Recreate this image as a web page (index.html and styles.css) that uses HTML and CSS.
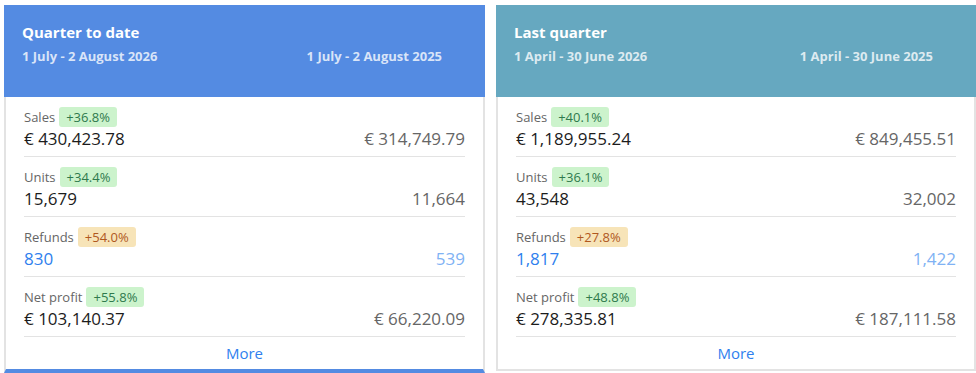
FILE: index.html
```html
<!DOCTYPE html>
<html lang="en">
<head>
<meta charset="utf-8">
<title>Quarter overview</title>
<link rel="stylesheet" href="styles.css">
</head>
<body>
<div class="cards">
  <section class="card card-active">
    <header class="card-head head-blue">
      <h2 class="card-title">Quarter to date</h2>
      <div class="dates">
        <span>1 July - 2 August 2026</span>
        <span>1 July - 2 August 2025</span>
      </div>
    </header>
    <div class="card-body">
      <div class="row">
        <div class="label">Sales <span class="badge up">+36.8%</span></div>
        <div class="values"><span class="cur">€ 430,423.78</span><span class="prev">€ 314,749.79</span></div>
      </div>
      <div class="row">
        <div class="label">Units <span class="badge up">+34.4%</span></div>
        <div class="values"><span class="cur">15,679</span><span class="prev">11,664</span></div>
      </div>
      <div class="row">
        <div class="label">Refunds <span class="badge warn">+54.0%</span></div>
        <div class="values link"><span class="cur">830</span><span class="prev">539</span></div>
      </div>
      <div class="row">
        <div class="label">Net profit <span class="badge up">+55.8%</span></div>
        <div class="values"><span class="cur">€ 103,140.37</span><span class="prev">€ 66,220.09</span></div>
      </div>
      <a class="more" href="#">More</a>
    </div>
  </section>
  <section class="card">
    <header class="card-head head-teal">
      <h2 class="card-title">Last quarter</h2>
      <div class="dates">
        <span>1 April - 30 June 2026</span>
        <span>1 April - 30 June 2025</span>
      </div>
    </header>
    <div class="card-body">
      <div class="row">
        <div class="label">Sales <span class="badge up">+40.1%</span></div>
        <div class="values"><span class="cur">€ 1,189,955.24</span><span class="prev">€ 849,455.51</span></div>
      </div>
      <div class="row">
        <div class="label">Units <span class="badge up">+36.1%</span></div>
        <div class="values"><span class="cur">43,548</span><span class="prev">32,002</span></div>
      </div>
      <div class="row">
        <div class="label">Refunds <span class="badge warn">+27.8%</span></div>
        <div class="values link"><span class="cur">1,817</span><span class="prev">1,422</span></div>
      </div>
      <div class="row">
        <div class="label">Net profit <span class="badge up">+48.8%</span></div>
        <div class="values"><span class="cur">€ 278,335.81</span><span class="prev">€ 187,111.58</span></div>
      </div>
      <a class="more" href="#">More</a>
    </div>
  </section>
</div>
</body>
</html>
```

FILE: styles.css
```css
* { box-sizing: border-box; }

html, body {
  margin: 0;
  padding: 0;
  background: #ffffff;
}

body {
  font-family: "Open Sans", "Liberation Sans", sans-serif;
  color: #222;
  overflow: hidden;
}

.cards {
  display: grid;
  grid-template-columns: 481px 480px;
  column-gap: 11px;
  padding: 5px 0 0 4px;
}

.card {
  display: flex;
  flex-direction: column;
}

.card-head {
  padding: 17px 43px 32px 18px;
  color: #fff;
}

.head-blue { background: #548be2; }
.head-teal { background: #66a8c0; }

.card-title {
  margin: 0;
  font-size: 15px;
  line-height: 20px;
  font-weight: 700;
}

.dates {
  display: flex;
  justify-content: space-between;
  margin-top: 6px;
  font-size: 13px;
  line-height: 17px;
  font-weight: 700;
  color: rgba(255, 255, 255, 0.78);
}

.card-body {
  border: 2px solid #e3e3e3;
  border-top: 0;
  padding: 0 18px;
  display: flex;
  flex-direction: column;
}

.card-active .card-body {
  border-bottom: 4px solid #548be2;
}

.row {
  padding: 10px 0 5px;
  border-bottom: 1px solid #e3e3e3;
}

.label {
  display: flex;
  align-items: center;
  gap: 4px;
  height: 20px;
  font-size: 13px;
  color: #666;
}

.badge {
  display: inline-block;
  height: 20px;
  line-height: 20px;
  padding: 0 7px;
  border-radius: 3px;
  font-size: 13px;
}

.badge.up {
  background: #ccf3cc;
  color: #2f7a4c;
}

.badge.warn {
  background: #f7e4b8;
  color: #b0581e;
}

.values {
  display: flex;
  justify-content: space-between;
  font-size: 17px;
  line-height: 24px;
}

.values .cur { color: #1c1c1c; }
.values .prev { color: #666; }

.values.link .cur { color: #2f7fee; }
.values.link .prev { color: #80b2f4; }

.more {
  display: block;
  height: 32px;
  line-height: 32px;
  text-align: center;
  font-size: 15px;
  color: #2f7fee;
  text-decoration: none;
}
```
